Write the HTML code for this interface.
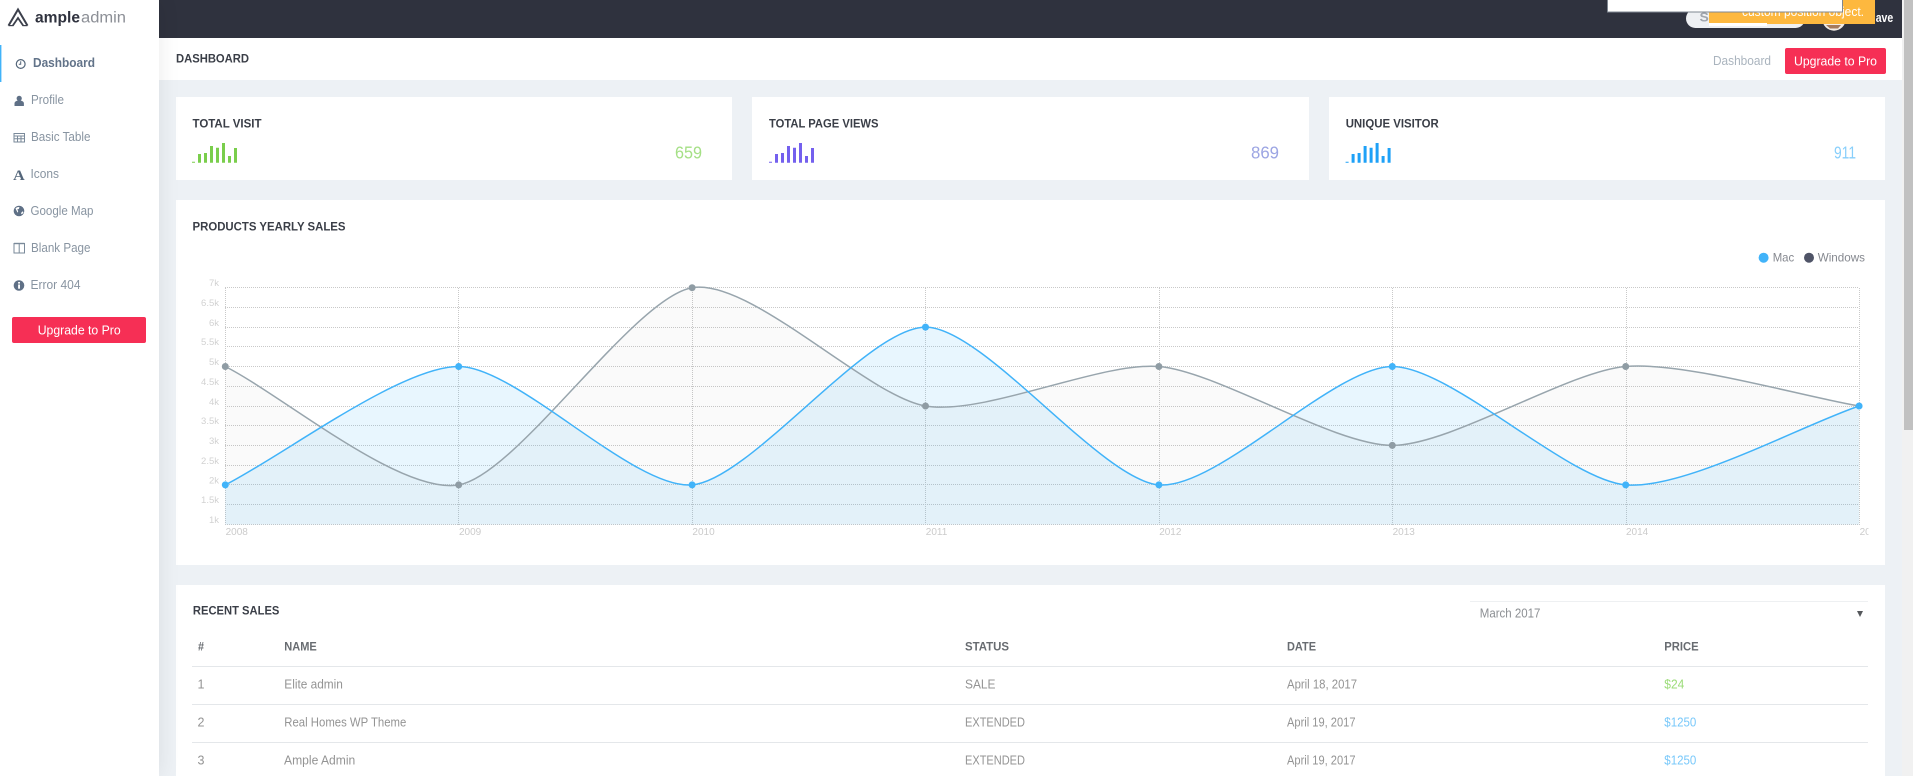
<!DOCTYPE html>
<html lang="en">
<head>
<meta charset="utf-8">
<title>Ample Admin Dashboard</title>
<style>
html,body{margin:0;padding:0;width:1913px;height:776px;overflow:hidden;background:#edf1f5;font-family:"Liberation Sans",sans-serif}
.b{position:absolute;background:#fff}
#side{left:0;top:0;width:159px;height:776px;box-shadow:1px 0 20px rgba(0,0,0,.08);z-index:2}
#top{left:159px;top:0;width:1743px;height:38px;background:#2f323e;z-index:1}
#crumb{left:159px;top:38px;width:1743px;height:42px;z-index:1}
.card{z-index:1}
#track{left:1902px;top:0;width:11px;height:776px;background:#f1f1f1;z-index:1}
#thumb{left:1904px;top:0;width:9px;height:430px;background:#c1c1c1;z-index:1}
svg{position:absolute;left:0;top:0;z-index:3}
text{font-family:"Liberation Sans",sans-serif;font-size:12.5px}
.nav{fill:#8894a1}
.bd{font-weight:700}
.h{font-weight:700;fill:#3a3e47;font-size:12px}
.th{font-weight:700;fill:#686c71;font-size:12px}
.td{fill:#949494;font-size:12.5px}
.yl{fill:#d2d2d2;font-size:9.5px;text-anchor:end}
.xl{fill:#cbcbcb;font-size:10px}
.num{font-size:17.5px}
</style>
</head>
<body>
<div class="b" id="side"></div>
<div class="b" id="top"></div>
<div class="b" id="crumb"></div>
<div class="b card" style="left:176px;top:97px;width:556px;height:83px"></div>
<div class="b card" style="left:752px;top:97px;width:557px;height:83px"></div>
<div class="b card" style="left:1329px;top:97px;width:556px;height:83px"></div>
<div class="b card" style="left:176px;top:200px;width:1709px;height:365px"></div>
<div class="b card" style="left:176px;top:585px;width:1709px;height:191px"></div>
<div class="b" id="track"></div>
<div class="b" id="thumb"></div>

<svg width="1913" height="776" viewBox="0 0 1913 776" xmlns="http://www.w3.org/2000/svg">
<defs>
<clipPath id="chartclip"><rect x="170" y="270" width="1698.5" height="280"/></clipPath>
</defs>

<!-- logo -->
<g fill="none" stroke="#3c404c" stroke-linejoin="miter">
<path d="M8.5 25.6L18 9.5L27.5 25.6" stroke-width="2"/>
<path d="M12.8 25.6L18 18L23.2 25.6" stroke-width="1.8"/>
<path d="M8.5 25.6H13.5" stroke-width="1.2"/>
<path d="M22.5 25.6H27.5" stroke-width="1.2"/>
</g>
<text x="35" y="22.5" textLength="45" lengthAdjust="spacingAndGlyphs" style="font-size:15.5px;font-weight:700;fill:#2f323e">ample</text>
<text x="81" y="22.5" textLength="45" lengthAdjust="spacingAndGlyphs" style="font-size:15.5px;fill:#8c8f96">admin</text>

<!-- sidebar -->
<rect x="0" y="45" width="1.4" height="37" fill="#41b3f9"/>
<circle cx="20.7" cy="64" r="4.4" fill="none" stroke="#54667a" stroke-width="1.2"/>
<path d="M20.7 61.3V64.2H18.8" fill="none" stroke="#54667a" stroke-width="1"/>
<text x="33" y="67" textLength="62" lengthAdjust="spacingAndGlyphs" class="bd" style="fill:#627389">Dashboard</text>

<circle cx="19.2" cy="98.4" r="2.6" fill="#5f7086"/>
<path d="M14.5 106v-2.6c0-2 2.2-2.9 4.7-2.9s4.7 .9 4.7 2.9V106z" fill="#5f7086"/>
<text x="31" y="104" textLength="33" lengthAdjust="spacingAndGlyphs" class="nav">Profile</text>

<path d="M14 133.5h10.5v8.5H14zM14 136h10.5M14 138.8h10.5M17.5 136v6M21 136v6" fill="none" stroke="#7a8a9a" stroke-width="1"/>
<text x="31" y="141" textLength="59.5" lengthAdjust="spacingAndGlyphs" class="nav">Basic Table</text>

<text x="13.2" y="180" textLength="11.6" lengthAdjust="spacingAndGlyphs" style="font-family:'Liberation Serif',serif;font-weight:700;font-size:14.5px;fill:#54667a">A</text>
<text x="30.5" y="178" textLength="28.5" lengthAdjust="spacingAndGlyphs" class="nav">Icons</text>

<circle cx="19" cy="211" r="5.3" fill="#5f7086"/>
<path d="M15.5 208.5c1.5-1.6 3-1.7 4-1.2l-.7 1.7-1.6.4 1 1.7-.6 1.7zM21 213l1.7-1.7.8 1c-.4 1-1 1.6-2 2z" fill="#fff"/>
<text x="30.5" y="215" textLength="63" lengthAdjust="spacingAndGlyphs" class="nav">Google Map</text>

<path d="M14 243.5h10.5v9.5H14zM19.2 243.5v9.5" fill="none" stroke="#7a8a9a" stroke-width="1"/>
<path d="M14 243.5h10.5" fill="none" stroke="#7a8a9a" stroke-width="1.4"/>
<text x="31" y="252" textLength="59.5" lengthAdjust="spacingAndGlyphs" class="nav">Blank Page</text>

<circle cx="19" cy="285.5" r="5.3" fill="#5f7086"/>
<rect x="18.1" y="282" width="1.9" height="1.6" fill="#fff"/>
<rect x="18.1" y="284.5" width="1.9" height="4.2" fill="#fff"/>
<text x="30.5" y="289" textLength="50" lengthAdjust="spacingAndGlyphs" class="nav">Error 404</text>

<rect x="12" y="317" width="134" height="26" rx="2" fill="#f62f55"/>
<text x="37.7" y="334.5" textLength="83" lengthAdjust="spacingAndGlyphs" style="fill:#fff">Upgrade to Pro</text>

<!-- top bar right -->
<rect x="1686" y="9" width="119" height="19" rx="9.5" fill="#eef0f3"/>
<text x="1699.5" y="21.5" textLength="17" lengthAdjust="spacingAndGlyphs" class="bd" style="fill:#a0a5ad;font-size:13px">Se</text>
<circle cx="1834" cy="19" r="11.7" fill="#f3ece6"/>
<path d="M1826 25h15l-3 3.5h-8z" fill="#a57a5c"/>
<text x="1875.7" y="22" textLength="17.5" lengthAdjust="spacingAndGlyphs" class="bd" style="fill:#fff">ave</text>
<rect x="1709" y="0" width="166" height="24" fill="#fdb83f"/>
<rect x="1709" y="23" width="58" height="3" fill="#fff"/>
<text x="1742" y="16" textLength="122" lengthAdjust="spacingAndGlyphs" style="fill:#fff">custom position object.</text>
<rect x="1607.5" y="-2" width="235" height="14" fill="#fff" stroke="#7f8791" stroke-width="1"/>

<!-- breadcrumb -->
<text x="176" y="62.6" textLength="73" lengthAdjust="spacingAndGlyphs" class="h">DASHBOARD</text>
<text x="1713" y="65" textLength="58" lengthAdjust="spacingAndGlyphs" style="fill:#aab4be">Dashboard</text>
<rect x="1785" y="48" width="101" height="26" rx="2" fill="#f62f55"/>
<text x="1794" y="65.5" textLength="83" lengthAdjust="spacingAndGlyphs" style="fill:#fff">Upgrade to Pro</text>

<!-- stat cards -->
<text x="192.5" y="127.5" textLength="69" lengthAdjust="spacingAndGlyphs" class="h">TOTAL VISIT</text>
<text x="769" y="127.5" textLength="109.5" lengthAdjust="spacingAndGlyphs" class="h">TOTAL PAGE VIEWS</text>
<text x="1345.7" y="127.5" textLength="93" lengthAdjust="spacingAndGlyphs" class="h">UNIQUE VISITOR</text>
<path fill="#7ace4c" d="M192 162.7v-1h3v1zM198 162.7v-8.7h3v8.7zM204 162.7v-9.7h3v9.7zM210 162.7v-16.7h3v16.7zM216 162.7v-15h3v15zM222 162.7v-19.7h3v19.7zM228 162.7v-6.7h3v6.7zM234 162.7v-14.7h3v14.7z"/>
<path transform="translate(577 0)" fill="#7460ee" d="M192 162.7v-1h3v1zM198 162.7v-8.7h3v8.7zM204 162.7v-9.7h3v9.7zM210 162.7v-16.7h3v16.7zM216 162.7v-15h3v15zM222 162.7v-19.7h3v19.7zM228 162.7v-6.7h3v6.7zM234 162.7v-14.7h3v14.7z"/>
<path transform="translate(1153.6 0)" fill="#1ea1f7" d="M192 162.7v-1h3v1zM198 162.7v-8.7h3v8.7zM204 162.7v-9.7h3v9.7zM210 162.7v-16.7h3v16.7zM216 162.7v-15h3v15zM222 162.7v-19.7h3v19.7zM228 162.7v-6.7h3v6.7zM234 162.7v-14.7h3v14.7z"/>
<text x="675" y="158.3" textLength="27" lengthAdjust="spacingAndGlyphs" class="num" style="fill:#a5e086">659</text>
<text x="1251" y="158.3" textLength="28" lengthAdjust="spacingAndGlyphs" class="num" style="fill:#9ca5e3">869</text>
<text x="1834" y="158.3" textLength="22" lengthAdjust="spacingAndGlyphs" class="num" style="fill:#88cffb">911</text>

<!-- chart -->
<text x="192.5" y="230.6" textLength="153" lengthAdjust="spacingAndGlyphs" class="h">PRODUCTS YEARLY SALES</text>
<circle cx="1763.6" cy="257.7" r="5" fill="#41b3f9"/>
<text x="1772.7" y="261.7" textLength="21.5" lengthAdjust="spacingAndGlyphs" style="fill:#85888f;font-size:12px">Mac</text>
<circle cx="1809" cy="257.7" r="5" fill="#4f5467"/>
<text x="1817.7" y="261.7" textLength="47.3" lengthAdjust="spacingAndGlyphs" style="fill:#85888f;font-size:12px">Windows</text>

<path fill="none" stroke="#c9c9c9" stroke-width="1" stroke-dasharray="1 1" d="M225 287.5H1859M225 307.5H1859M225 327.5H1859M225 346.5H1859M225 366.5H1859M225 386.5H1859M225 406.5H1859M225 425.5H1859M225 445.5H1859M225 465.5H1859M225 484.5H1859M225 504.5H1859M225 524.5H1859M225.5 288V525M458.5 288V525M692.5 288V525M925.5 288V525M1159.5 288V525M1392.5 288V525M1626.5 288V525M1859.5 288V525"/>

<path fill="#000" fill-opacity=".02" d="M225.3,366.5C283.65,396.1 400.35,494.75 458.7,484.9C517.05,475.05 633.75,297.56 692.1,287.7C750.45,277.84 867.15,396.15 925.5,406C983.85,415.85 1100.55,361.575 1158.9,366.5C1217.25,371.425 1333.95,445.4 1392.3,445.4C1450.65,445.4 1567.35,371.425 1625.7,366.5C1684.05,361.575 1800.75,396.125 1859.1,406L1859.1,524.5L225.3,524.5Z"/>
<path fill="#41b3f9" fill-opacity=".12" d="M225.3,484.9C283.65,455.3 400.35,366.5 458.7,366.5C517.05,366.5 633.75,489.825 692.1,484.9C750.45,479.975 867.15,327.1 925.5,327.1C983.85,327.1 1100.55,479.975 1158.9,484.9C1217.25,489.825 1333.95,366.5 1392.3,366.5C1450.65,366.5 1567.35,479.96 1625.7,484.9C1684.05,489.84 1800.75,425.73 1859.1,406L1859.1,524.5L225.3,524.5Z"/>
<path fill="none" stroke="#98a5ad" stroke-width="1.5" d="M225.3,366.5C283.65,396.1 400.35,494.75 458.7,484.9C517.05,475.05 633.75,297.56 692.1,287.7C750.45,277.84 867.15,396.15 925.5,406C983.85,415.85 1100.55,361.575 1158.9,366.5C1217.25,371.425 1333.95,445.4 1392.3,445.4C1450.65,445.4 1567.35,371.425 1625.7,366.5C1684.05,361.575 1800.75,396.125 1859.1,406"/>
<path fill="none" stroke="#41b3f9" stroke-width="1.5" d="M225.3,484.9C283.65,455.3 400.35,366.5 458.7,366.5C517.05,366.5 633.75,489.825 692.1,484.9C750.45,479.975 867.15,327.1 925.5,327.1C983.85,327.1 1100.55,479.975 1158.9,484.9C1217.25,489.825 1333.95,366.5 1392.3,366.5C1450.65,366.5 1567.35,479.96 1625.7,484.9C1684.05,489.84 1800.75,425.73 1859.1,406"/>
<g fill="#8f9ca4">
<circle cx="225.3" cy="366.5" r="3.5"/><circle cx="458.7" cy="484.9" r="3.5"/><circle cx="692.1" cy="287.7" r="3.5"/><circle cx="925.5" cy="406" r="3.5"/><circle cx="1158.9" cy="366.5" r="3.5"/><circle cx="1392.3" cy="445.4" r="3.5"/><circle cx="1625.7" cy="366.5" r="3.5"/>
</g>
<g fill="#41b3f9">
<circle cx="225.3" cy="484.9" r="3.5"/><circle cx="458.7" cy="366.5" r="3.5"/><circle cx="692.1" cy="484.9" r="3.5"/><circle cx="925.5" cy="327.1" r="3.5"/><circle cx="1158.9" cy="484.9" r="3.5"/><circle cx="1392.3" cy="366.5" r="3.5"/><circle cx="1625.7" cy="484.9" r="3.5"/><circle cx="1859.1" cy="406" r="3.5"/>
</g>
<g>
<text class="yl" x="219" y="286">7k</text>
<text class="yl" x="219" y="306">6.5k</text>
<text class="yl" x="219" y="326">6k</text>
<text class="yl" x="219" y="345">5.5k</text>
<text class="yl" x="219" y="365">5k</text>
<text class="yl" x="219" y="385">4.5k</text>
<text class="yl" x="219" y="405">4k</text>
<text class="yl" x="219" y="424">3.5k</text>
<text class="yl" x="219" y="444">3k</text>
<text class="yl" x="219" y="464">2.5k</text>
<text class="yl" x="219" y="483.5">2k</text>
<text class="yl" x="219" y="503">1.5k</text>
<text class="yl" x="219" y="523">1k</text>
</g>
<g clip-path="url(#chartclip)">
<text class="xl" x="225.6" y="535">2008</text>
<text class="xl" x="459" y="535">2009</text>
<text class="xl" x="692.4" y="535">2010</text>
<text class="xl" x="925.8" y="535">2011</text>
<text class="xl" x="1159.2" y="535">2012</text>
<text class="xl" x="1392.6" y="535">2013</text>
<text class="xl" x="1626" y="535">2014</text>
<text class="xl" x="1859.6" y="535">2015</text>
</g>

<!-- table -->
<text x="192.9" y="614.3" textLength="86.5" lengthAdjust="spacingAndGlyphs" class="h">RECENT SALES</text>
<rect x="1470" y="601" width="398" height="1" fill="#eef0f2"/>
<text x="1479.8" y="617.6" textLength="60.6" lengthAdjust="spacingAndGlyphs" style="fill:#8c8f93">March 2017</text>
<path d="M1857 611h6l-3 6z" fill="#55585c"/>

<text x="198" y="650.4" class="th" textLength="6" lengthAdjust="spacingAndGlyphs">#</text>
<text x="284.3" y="650.4" class="th" textLength="32.5" lengthAdjust="spacingAndGlyphs">NAME</text>
<text x="965" y="650.4" class="th" textLength="44" lengthAdjust="spacingAndGlyphs">STATUS</text>
<text x="1287" y="650.4" class="th" textLength="29" lengthAdjust="spacingAndGlyphs">DATE</text>
<text x="1664.3" y="650.4" class="th" textLength="34.4" lengthAdjust="spacingAndGlyphs">PRICE</text>
<rect x="192" y="666" width="1676" height="1" fill="#e4e7ea"/>

<text x="197.5" y="688.4" class="td">1</text>
<text x="284.3" y="688.4" class="td" textLength="58.6" lengthAdjust="spacingAndGlyphs">Elite admin</text>
<text x="965" y="688.4" class="td" textLength="30.5" lengthAdjust="spacingAndGlyphs">SALE</text>
<text x="1287" y="688.4" class="td" textLength="70" lengthAdjust="spacingAndGlyphs">April 18, 2017</text>
<text x="1664.3" y="688.4" class="td" textLength="20" lengthAdjust="spacingAndGlyphs" style="fill:#9bdc78">$24</text>
<rect x="192" y="704" width="1676" height="1" fill="#e4e7ea"/>

<text x="197.5" y="726.4" class="td">2</text>
<text x="284.3" y="726.4" class="td" textLength="122" lengthAdjust="spacingAndGlyphs">Real Homes WP Theme</text>
<text x="965" y="726.4" class="td" textLength="60" lengthAdjust="spacingAndGlyphs">EXTENDED</text>
<text x="1287" y="726.4" class="td" textLength="68.5" lengthAdjust="spacingAndGlyphs">April 19, 2017</text>
<text x="1664.3" y="726.4" class="td" textLength="32" lengthAdjust="spacingAndGlyphs" style="fill:#78c8fa">$1250</text>
<rect x="192" y="742" width="1676" height="1" fill="#e4e7ea"/>

<text x="197.5" y="764.4" class="td">3</text>
<text x="284" y="764.4" class="td" textLength="71.3" lengthAdjust="spacingAndGlyphs">Ample Admin</text>
<text x="965" y="764.4" class="td" textLength="60" lengthAdjust="spacingAndGlyphs">EXTENDED</text>
<text x="1287" y="764.4" class="td" textLength="68.5" lengthAdjust="spacingAndGlyphs">April 19, 2017</text>
<text x="1664.3" y="764.4" class="td" textLength="32" lengthAdjust="spacingAndGlyphs" style="fill:#78c8fa">$1250</text>
</svg>
</body>
</html>
